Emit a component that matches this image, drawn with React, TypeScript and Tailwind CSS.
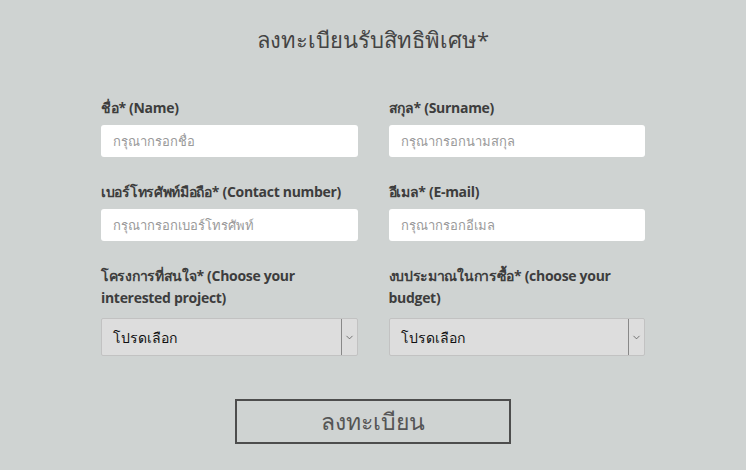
import { ChevronDown } from "lucide-react";

const font = { fontFamily: '"Open Sans", "Noto Sans", sans-serif' };

const TextField = ({ label, placeholder }: { label: string; placeholder: string }) => (
  <div className="flex flex-col">
    <label className="text-[14px] leading-[22px] font-bold tracking-[-0.3px] text-[#3d3d3d] mb-[6px]">{label}</label>
    <input
      className="h-[32px] w-full rounded-[3px] bg-white px-[12px] text-[13px] text-[#333] placeholder:text-[#9a9a9a] outline-none"
      placeholder={placeholder}
    />
  </div>
);

const SelectField = ({ label }: { label: string }) => (
  <div className="flex flex-col">
    <label className="text-[14px] leading-[22px] font-bold tracking-[-0.3px] text-[#3d3d3d] mb-[9px]">{label}</label>
    <div className="flex h-[38px] w-full rounded-[2px] border border-[#c2c2c2] bg-[#dddddd]">
      <div className="flex-1 flex items-center px-[11px] text-[14px] text-[#111]">โปรดเลือก</div>
      <div className="w-[16px] flex items-center justify-center border-l border-[#888]">
        <ChevronDown size={11} strokeWidth={1.5} className="text-[#444]" />
      </div>
    </div>
  </div>
);

export default function App() {
  return (
    <div className="w-full min-h-[470px] bg-[#cfd3d2] flex flex-col items-center pt-[23px]" style={font}>
      <h1 className="text-[22px] leading-[32px] text-[#444]">ลงทะเบียนรับสิทธิพิเศษ*</h1>

      <div className="mt-[42px] w-[544px] grid grid-cols-2 gap-x-[31px] gap-y-[24px]">
        <TextField label="ชื่อ* (Name)" placeholder="กรุณากรอกชื่อ" />
        <TextField label="สกุล* (Surname)" placeholder="กรุณากรอกนามสกุล" />
        <TextField label="เบอร์โทรศัพท์มือถือ* (Contact number)" placeholder="กรุณากรอกเบอร์โทรศัพท์" />
        <TextField label="อีเมล* (E-mail)" placeholder="กรุณากรอกอีเมล" />
        <SelectField label="โครงการที่สนใจ* (Choose your interested project)" />
        <SelectField label="งบประมาณในการซื้อ* (choose your budget)" />
      </div>

      <button className="mt-[43px] w-[276px] h-[45px] border-2 border-[#4d4d4d] text-[23px] text-[#555]">
        ลงทะเบียน
      </button>
    </div>
  );
}
